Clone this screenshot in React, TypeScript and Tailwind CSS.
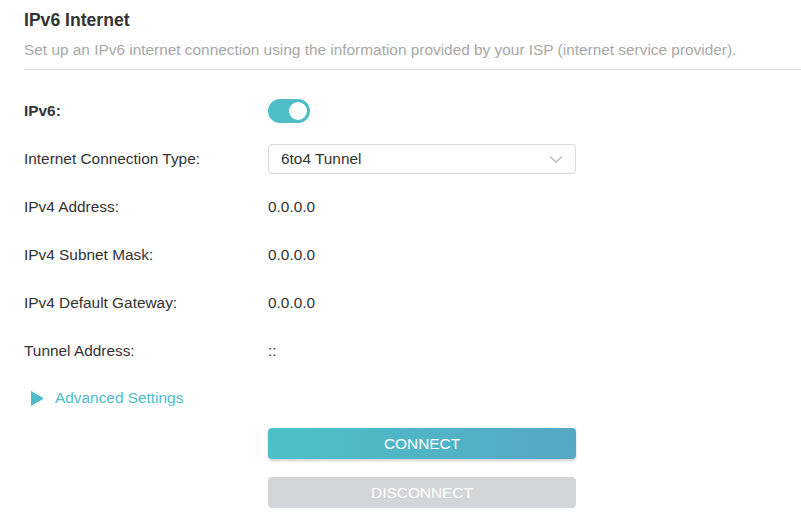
import * as React from "react";

const rows: { label: string; value: string }[] = [
  { label: "IPv4 Address:", value: "0.0.0.0" },
  { label: "IPv4 Subnet Mask:", value: "0.0.0.0" },
  { label: "IPv4 Default Gateway:", value: "0.0.0.0" },
  { label: "Tunnel Address:", value: "::" },
];

function Row({ label, children, bold }: { label: string; children: React.ReactNode; bold?: boolean }) {
  return (
    <div className="flex h-12 items-center">
      <div className={`w-[244px] text-[15.4px] text-[#333] ${bold ? "font-bold" : ""}`}>{label}</div>
      <div className="flex items-center text-[15.4px] text-[#333]">{children}</div>
    </div>
  );
}

export default function App() {
  const [enabled, setEnabled] = React.useState(true);

  return (
    <div className="min-h-[532px] w-[801px] bg-white font-['Liberation_Sans',Arial,sans-serif]">
      <div className="pl-6 pt-[10px]">
        <div className="border-b border-[#dcdcdc] pb-[9px]">
          <h1 className="text-[17.6px] font-bold leading-5 text-[#333]">IPv6 Internet</h1>
          <p className="mt-[10px] text-[15.4px] leading-5 text-[#a8a8a8]">
            Set up an IPv6 internet connection using the information provided by your ISP (internet service provider).
          </p>
        </div>

        <div className="mt-[17px]">
          <Row label="IPv6:" bold>
            <button
              onClick={() => setEnabled(!enabled)}
              className={`flex h-6 w-[42px] items-center rounded-full px-[3px] ${enabled ? "justify-end bg-[#4dbdc8]" : "justify-start bg-[#ccc]"}`}
            >
              <span className="h-[18px] w-[18px] rounded-full bg-white" />
            </button>
          </Row>
          <Row label="Internet Connection Type:">
            <div className="flex h-[30px] w-[308px] items-center justify-between rounded-[4px] border border-[#d9d9d9] px-3">
              <span>6to4 Tunnel</span>
              <svg width="14" height="14" viewBox="0 0 14 14" fill="none" stroke="#b8b8b8" strokeWidth="1.3">
                <path d="M1 4.5l6 5.5 6-5.5" />
              </svg>
            </div>
          </Row>
          {rows.map((r) => (
            <Row key={r.label} label={r.label}>
              {r.value}
            </Row>
          ))}
        </div>

        <div className="flex h-[46px] items-center pl-[7px]">
          <svg width="13" height="15" viewBox="0 0 13 15">
            <path d="M0 0L13 7.5L0 15Z" fill="#4dbdc8" />
          </svg>
          <span className="ml-[11px] text-[15.4px] text-[#4dbdc8]">Advanced Settings</span>
        </div>

        <div className="ml-[244px] flex w-[308px] flex-col">
          <button className="mt-[7px] h-[31px] rounded-[4px] bg-gradient-to-r from-[#4bc0c8] to-[#55a8c4] text-[15.4px] text-white shadow-[0_2px_3px_rgba(0,0,0,0.18)]">
            CONNECT
          </button>
          <button className="mt-[18px] h-[31px] rounded-[4px] bg-[#d4d5d7] text-[15.4px] text-white">
            DISCONNECT
          </button>
        </div>
      </div>
    </div>
  );
}
